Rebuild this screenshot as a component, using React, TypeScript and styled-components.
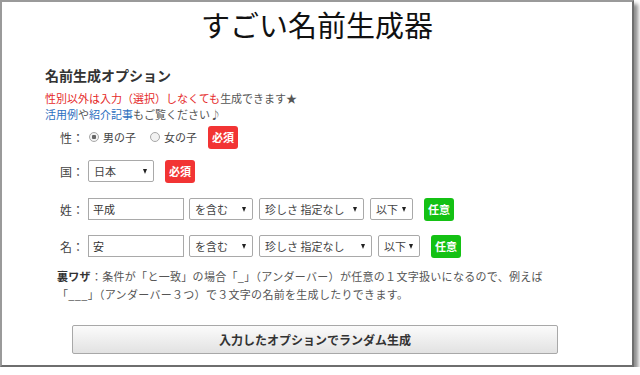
import styled, { createGlobalStyle } from 'styled-components';

const GlobalStyle = createGlobalStyle`
  html, body {
    margin: 0;
    padding: 0;
    background: #fff;
  }
  body {
    font-family: 'Noto Sans CJK JP', 'Noto Sans', sans-serif;
    color: #555;
  }
`;

const Frame = styled.div`
  box-sizing: border-box;
  width: 634px;
  height: 367px;
  border: 2px solid #9a9a9a;
  border-right-color: #6e6e6e;
  border-bottom-color: #6e6e6e;
  box-shadow: 4px 4px 4px rgba(0, 0, 0, 0.45);
  background: #fff;
`;

const Title = styled.h1`
  margin: 0;
  padding-top: 4px;
  font-size: 29px;
  line-height: 36px;
  font-weight: 400;
  color: #111;
  text-align: center;
`;

const Options = styled.section`
  padding-left: 43px;
`;

const Heading = styled.h2`
  margin: 23px 0 0;
  font-size: 14px;
  line-height: 20px;
  font-weight: 700;
  color: #333;
`;

const Notice = styled.div`
  margin-top: 5px;
  font-size: 11px;
  line-height: 16px;
  color: #555;
`;

const Red = styled.span`
  color: #e52a2a;
`;

const Link = styled.a`
  color: #2b6fc0;
  text-decoration: none;
`;

const Form = styled.div`
  padding-left: 15px;
`;

const Row = styled.div<{ $gap: number }>`
  display: flex;
  align-items: center;
  height: 26px;
  margin-top: ${(p) => p.$gap}px;
`;

const Label = styled.span`
  width: 28px;
  font-size: 12px;
  color: #444;
`;

const RadioLabel = styled.label<{ $first?: boolean }>`
  display: flex;
  align-items: center;
  gap: 4px;
  margin-left: ${(p) => (p.$first ? 1 : 14)}px;
  font-size: 11px;
  color: #444;
`;

const Radio = styled.input`
  appearance: none;
  margin: 0;
  width: 10px;
  height: 10px;
  border: 1px solid #a8a8a8;
  border-radius: 50%;
  background: #f2f2f2;
  &:checked {
    background: radial-gradient(circle, #666 0 2px, #f2f2f2 2.5px);
  }
`;

const Badge = styled.span<{ $tone: 'red' | 'green'; $gap: number }>`
  display: flex;
  align-items: center;
  justify-content: center;
  width: 30px;
  height: 23px;
  margin-left: ${(p) => p.$gap}px;
  border-radius: 3px;
  background: ${(p) => (p.$tone === 'red' ? '#f23434' : '#14c114')};
  color: #fff;
  font-size: 11px;
  font-weight: 700;
`;

const TextInput = styled.input`
  box-sizing: border-box;
  width: 96px;
  height: 22px;
  margin: 0;
  padding: 0 4px;
  border: 1px solid #a9a9a9;
  font-family: inherit;
  font-size: 11px;
  color: #333;
`;

const Select = styled.div<{ $width: number; $gap: number }>`
  box-sizing: border-box;
  display: flex;
  align-items: center;
  justify-content: space-between;
  width: ${(p) => p.$width}px;
  height: 22px;
  margin-left: ${(p) => p.$gap}px;
  padding: 0 5px 0 5px;
  border: 1px solid #a9a9a9;
  border-radius: 2px;
  background: #fff;
  font-size: 11px;
  color: #444;
`;

const Arrow = styled.span`
  width: 0;
  height: 0;
  margin-right: 1px;
  border-left: 2.5px solid transparent;
  border-right: 2.5px solid transparent;
  border-top: 5px solid #222;
`;

const Note = styled.p`
  margin: 8px 0 0;
  padding-left: 12px;
  font-size: 11px;
  line-height: 18px;
  letter-spacing: 0.3px;
  color: #555;
`;

const Strong = styled.b`
  color: #333;
`;

const Generate = styled.button`
  display: block;
  width: 486px;
  height: 29px;
  margin: 22px 0 0 70px;
  border: 1px solid #a8a8a8;
  border-radius: 2px;
  background: linear-gradient(#fbfbfb, #e2e2e2);
  font-family: inherit;
  font-size: 12px;
  font-weight: 700;
  color: #333;
`;

function FakeSelect({ value, width, gap = 6 }: { value: string; width: number; gap?: number }) {
  return (
    <Select $width={width} $gap={gap} role='combobox'>
      <span>{value}</span>
      <Arrow />
    </Select>
  );
}

function NameRow({ label, value, gap, rarity, below, badgeGap }: {
  label: string;
  value: string;
  gap: number;
  rarity: number;
  below: number;
  badgeGap: number;
}) {
  return (
    <Row $gap={gap}>
      <Label>{label}：</Label>
      <TextInput defaultValue={value} />
      <FakeSelect value='を含む' width={64} gap={5} />
      <FakeSelect value='珍しさ 指定なし' width={rarity} />
      <FakeSelect value='以下' width={below} />
      <Badge $tone='green' $gap={badgeGap}>任意</Badge>
    </Row>
  );
}

export default function App() {
  return (
    <>
      <GlobalStyle />
      <Frame>
        <Title>すごい名前生成器</Title>
        <Options>
          <Heading>名前生成オプション</Heading>
          <Notice>
            <Red>性別以外は入力（選択）しなくても</Red>生成できます★
            <br />
            <Link href='#'>活用例</Link>や<Link href='#'>紹介記事</Link>もご覧ください♪
          </Notice>
          <Form>
            <Row $gap={2}>
              <Label>性：</Label>
              <RadioLabel $first>
                <Radio type='radio' name='sex' defaultChecked />
                男の子
              </RadioLabel>
              <RadioLabel>
                <Radio type='radio' name='sex' />
                女の子
              </RadioLabel>
              <Badge $tone='red' $gap={11}>必須</Badge>
            </Row>
            <Row $gap={8}>
              <Label>国：</Label>
              <FakeSelect value='日本' width={66} gap={0} />
              <Badge $tone='red' $gap={11}>必須</Badge>
            </Row>
            <NameRow label='姓' value='平成' gap={12} rarity={105} below={43} badgeGap={11} />
            <NameRow label='名' value='安' gap={11} rarity={113} below={42} badgeGap={11} />
          </Form>
          <Note>
            <Strong>裏ワザ</Strong>：条件が「と一致」の場合「_」（アンダーバー）が任意の１文字扱いになるので、例えば
            <br />
            「___」（アンダーバー３つ）で３文字の名前を生成したりできます。
          </Note>
        </Options>
        <Generate type='button'>入力したオプションでランダム生成</Generate>
      </Frame>
    </>
  );
}
